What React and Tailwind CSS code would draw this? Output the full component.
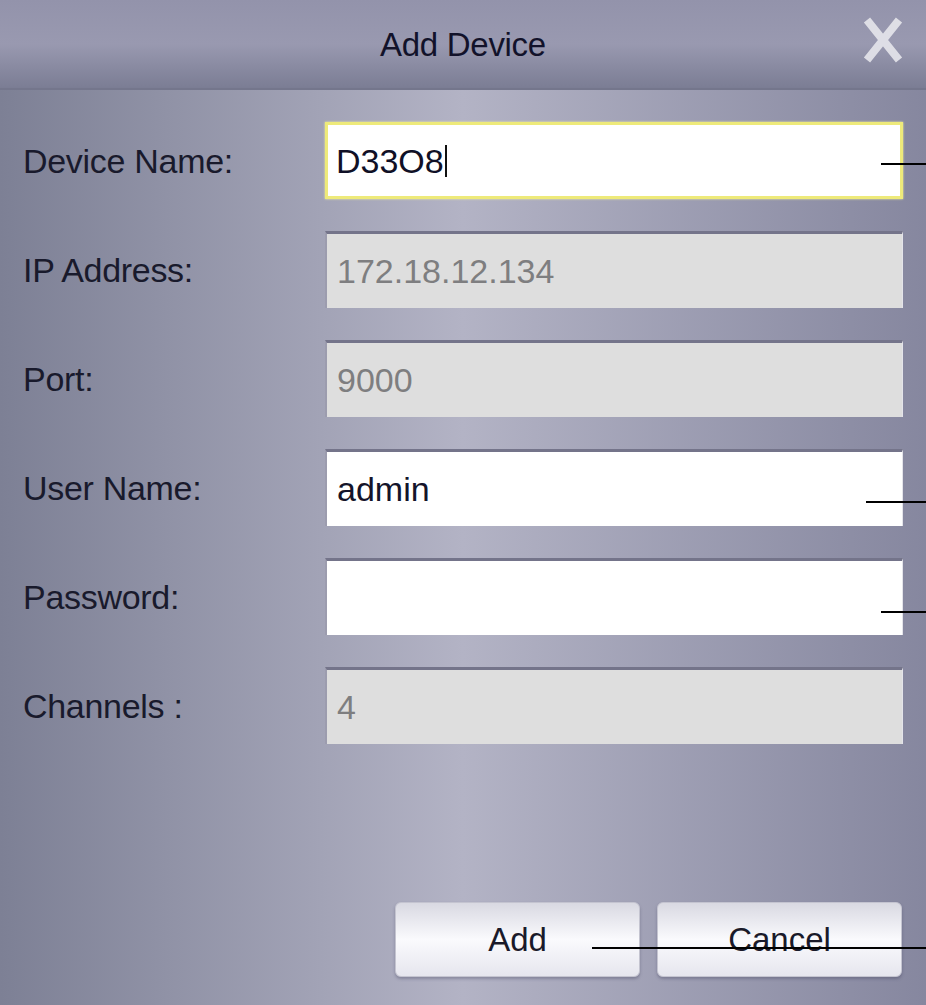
import React from 'react';

const fields = [
  { label: 'Device Name:', value: 'D33O8', kind: 'focus' },
  { label: 'IP Address:', value: '172.18.12.134', kind: 'disabled' },
  { label: 'Port:', value: '9000', kind: 'disabled' },
  { label: 'User Name:', value: 'admin', kind: 'enabled' },
  { label: 'Password:', value: '', kind: 'enabled' },
  { label: 'Channels :', value: '4', kind: 'disabled' },
];

function Field({ value, kind }) {
  if (kind === 'focus') {
    return (
      <div className="flex-1 h-[77px] flex items-center bg-white border-[3px] border-[#eeea7a] shadow-[0_0_2px_#f6f3a0] pl-[8px] text-[#101026]">
        <span>{value}</span>
        <span className="ml-[1px] w-[2px] h-[32px] bg-[#111]" />
      </div>
    );
  }
  const disabled = kind === 'disabled';
  return (
    <div
      className={
        'flex-1 h-[77px] flex items-center pl-[10px] border-t-[3px] border-t-[#74748a] border-l-[2px] border-l-[#9c9cae] border-r border-r-[#e4e4ea] ' +
        (disabled ? 'bg-[#dedede] text-[#7e7e80]' : 'bg-white text-[#14142a]')
      }
    >
      {value}
    </div>
  );
}

function CloseIcon() {
  return (
    <svg width="42" height="48" viewBox="0 0 42 48" className="opacity-90">
      <path d="M5 4 L37 44 M37 4 L5 44" stroke="#e6e6ec" strokeWidth="8" strokeLinecap="butt" />
    </svg>
  );
}

function DialogButton({ children }) {
  return (
    <button className="w-[245px] h-[75px] rounded-[6px] border border-[#c4c4d0] bg-gradient-to-b from-[#d9d9e2] via-[#fafafd] to-[#e6e6ee] shadow-[0_2px_3px_rgba(60,60,90,0.35)] text-[33px] text-[#1a1a2a]">
      {children}
    </button>
  );
}

export default function App() {
  return (
    <div
      className="relative w-full h-[1005px] overflow-hidden bg-gradient-to-r from-[#7d8095] via-[#b3b3c5] to-[#86879f] text-[34px] leading-none"
      style={{ fontFamily: '"Liberation Sans", Arial, sans-serif' }}
    >
      {/* Title bar */}
      <div className="relative h-[90px] flex items-center justify-center bg-gradient-to-b from-[#9393ab] via-[#9999b0] to-[#7b7d94] border-b-2 border-b-[#74768c]">
        <span className="text-[33px] text-[#12122a] tracking-[-0.3px]">Add Device</span>
        <div className="absolute right-[22px] top-[16px]">
          <CloseIcon />
        </div>
      </div>

      {/* Form */}
      <div className="flex flex-col gap-[32px] pt-[32px] pr-[23px]">
        {fields.map((f) => (
          <div key={f.label} className="flex items-center">
            <div className="w-[325px] pl-[23px] text-[#191a2c] tracking-[-0.3px]">{f.label}</div>
            <Field value={f.value} kind={f.kind} />
          </div>
        ))}
      </div>

      {/* Buttons */}
      <div className="flex justify-end gap-[17px] pr-[24px] mt-[158px]">
        <DialogButton>Add</DialogButton>
        <DialogButton>Cancel</DialogButton>
      </div>

      {/* Annotation lines */}
      <div className="absolute left-[881px] top-[163px] w-[45px] h-[2px] bg-black" />
      <div className="absolute left-[866px] top-[501px] w-[60px] h-[2px] bg-black" />
      <div className="absolute left-[881px] top-[611px] w-[45px] h-[2px] bg-black" />
      <div className="absolute left-[592px] top-[947px] w-[334px] h-[2px] bg-black" />
    </div>
  );
}
